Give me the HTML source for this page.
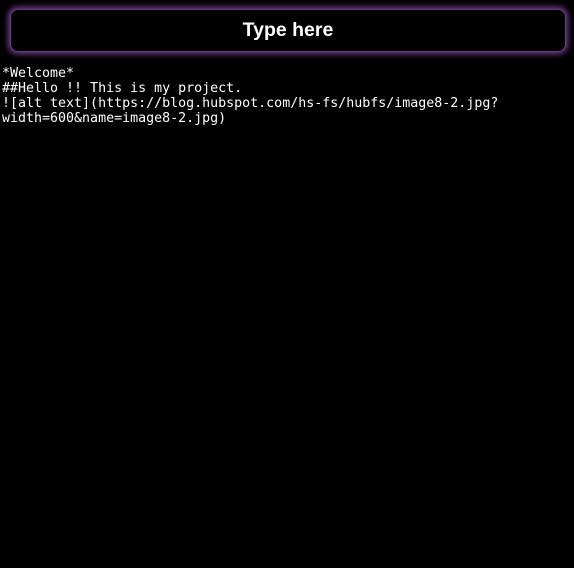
<!DOCTYPE html>
<html><head><style>
html,body{margin:0;padding:0;background:#000;width:574px;height:568px;overflow:hidden}
.bar{position:absolute;left:10px;top:9px;width:554px;height:41px;border:1px solid #6a3a80;border-radius:8px;background:#000;box-shadow:0 0 6px 2px rgba(150,80,190,0.75);color:#fff;font:bold 19.5px "Liberation Sans",sans-serif;text-align:center;line-height:41px}
pre{position:absolute;left:2px;top:65.5px;margin:0;color:#fff;font:13.3px/15.2px "DejaVu Sans Mono",monospace;white-space:pre}
</style></head><body>
<div class="bar">Type here</div>
<pre>*Welcome*
##Hello !! This is my project.
![alt text](https://blog.hubspot.com/hs-fs/hubfs/image8-2.jpg?
width=600&amp;name=image8-2.jpg)</pre>
</body></html>
